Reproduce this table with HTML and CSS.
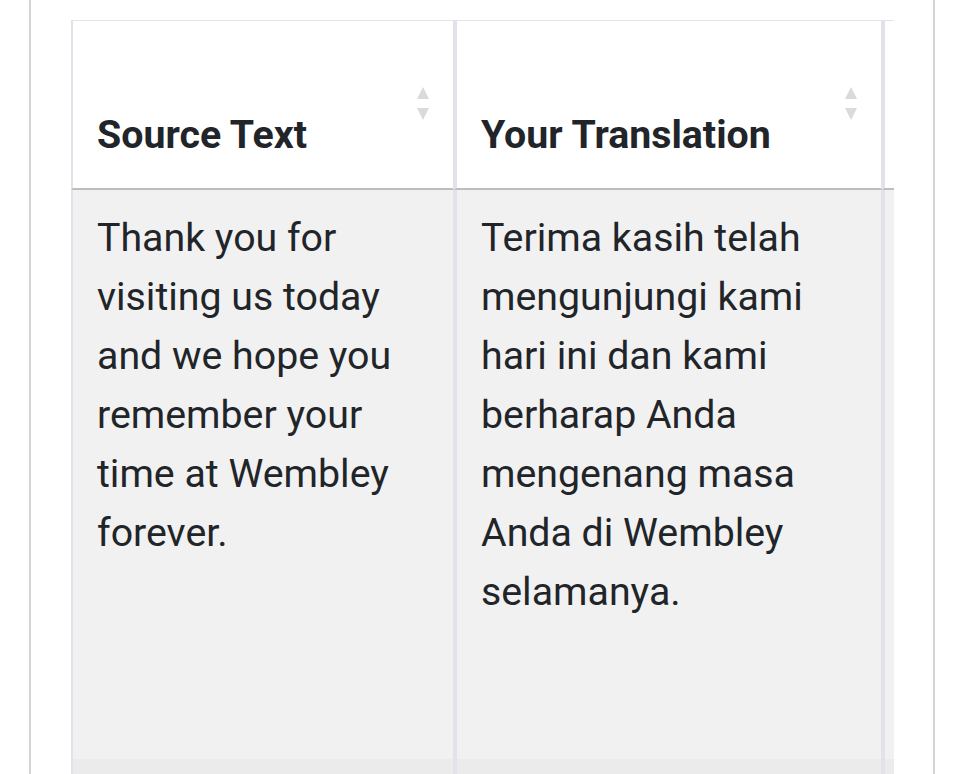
FILE: index.html
```html
<!DOCTYPE html>
<html>
<head>
  <meta charset="UTF-8">
  <title>Translations</title>
  <meta name="viewport" content="width=device-width, initial-scale=1.0">
  <link rel="stylesheet" href="styles.css">
</head>
<body>
  <div class="panel">
    <div class="table-wrap">
      <table class="trans-table">
        <thead>
          <tr>
            <th class="col-source">Source Text<span class="sort"></span></th>
            <th class="col-target">Your Translation<span class="sort"></span></th>
            <th class="col-extra"></th>
          </tr>
        </thead>
        <tbody>
          <tr class="row-odd">
            <td>Thank you for visiting us today and we hope you remember your time at Wembley forever.</td>
            <td>Terima kasih telah mengunjungi kami hari ini dan kami berharap Anda mengenang masa Anda di Wembley selamanya.</td>
            <td></td>
          </tr>
          <tr class="row-even">
            <td></td>
            <td></td>
            <td></td>
          </tr>
        </tbody>
      </table>
    </div>
  </div>
</body>
</html>
```

FILE: styles.css
```css
body {
  margin: 0;
  background: #fff;
  color: #212529;
  font-family: Roboto, "Noto Sans", sans-serif;
  overflow: hidden;
}
.panel {
  margin-left: 29px;
  width: 906px;
  min-height: 100vh;
  border-left: 2px solid #d4d4d4;
  border-right: 2px solid #d4d4d4;
  padding: 20px 0 0 40px;
  box-sizing: border-box;
}
.table-wrap {
  width: 823px;
  overflow: hidden;
  border-top: 1px solid #e4e4e4;
}
.trans-table {
  border-collapse: separate;
  border-spacing: 0;
  table-layout: fixed;
  width: 1210px;
}
.trans-table th,
.trans-table td {
  box-sizing: border-box;
  border-left: 4px solid #e2e2ea;
  padding: 0 24px;
  text-align: left;
  font-size: 39.3px;
  line-height: 59px;
}
.trans-table th.col-source,
.trans-table td:first-child {
  border-left-width: 2px;
}
.col-source { width: 382px; }
.col-target { width: 428px; }
.col-extra { width: 400px; }
.trans-table th {
  position: relative;
  height: 169px;
  background: #fff;
  font-weight: 700;
  vertical-align: bottom;
  padding-bottom: 23px;
  border-bottom: 2px solid #bdbdbd;
}
.sort {
  position: absolute;
  right: 24px;
  top: 66px;
  width: 12px;
  height: 34px;
}
.sort::before,
.sort::after {
  content: "";
  position: absolute;
  left: 0;
  border-left: 6px solid transparent;
  border-right: 6px solid transparent;
}
.sort::before {
  top: 0;
  border-bottom: 12px solid #dadada;
}
.sort::after {
  top: 21px;
  border-top: 12px solid #dadada;
}
.trans-table td {
  vertical-align: top;
  padding-top: 19px;
  font-weight: 400;
}
.row-odd td {
  height: 569px;
  background: #f1f1f1;
}
.row-even td {
  height: 80px;
  background: #ebebeb;
}
```
